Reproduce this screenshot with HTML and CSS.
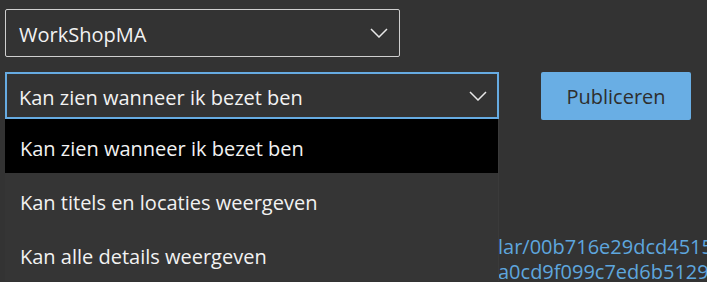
FILE: index.html
```html
<!DOCTYPE html>
<html>
<head>
  <title>Agenda publiceren</title>
  <link rel="stylesheet" href="styles.css">
</head>
<body>
  <div class="page">
    <div class="field field-calendar">
      <span class="field-text">WorkShopMA</span>
      <svg class="chevron" width="18" height="10" viewBox="0 0 18 10"><polyline points="1,1 9,9 17,1" fill="none" stroke="#e8e8e8" stroke-width="1.5"/></svg>
    </div>

    <div class="share-row">
      <div class="select-wrap">
        <div class="field field-open">
          <span class="field-text">Kan zien wanneer ik bezet ben</span>
          <svg class="chevron" width="18" height="10" viewBox="0 0 18 10"><polyline points="1,1 9,9 17,1" fill="none" stroke="#e8e8e8" stroke-width="1.5"/></svg>
        </div>
        <ul class="options">
          <li class="option selected">Kan zien wanneer ik bezet ben</li>
          <li class="option">Kan titels en locaties weergeven</li>
          <li class="option">Kan alle details weergeven</li>
        </ul>
      </div>
      <button class="publish">Publiceren</button>
    </div>

    <div class="links">
      <a class="link">lar/00b716e29dcd4515</a>
      <a class="link">a0cd9f099c7ed6b5129</a>
    </div>
  </div>
</body>
</html>
```

FILE: styles.css
```css
html, body{
  margin: 0;
  height: 100%;
  overflow: hidden;
}

body{
  background-color: #333333;
  font-family: "Open Sans", "Noto Sans", sans-serif;
  color: #f2f2f2;
}

.page{
  padding: 9px 0 0 5px;
}

.field{
  display: flex;
  align-items: center;
  justify-content: space-between;
  box-sizing: border-box;
  font-size: 20px;
}

.field-calendar{
  width: 395px;
  height: 48px;
  border: 1px solid #cfcfcf;
  border-radius: 2px;
  padding: 0 11px 0 13px;
}

.field-open{
  width: 494px;
  height: 47px;
  border: 2px solid #66abe2;
  padding: 0 10px 0 12px;
}

.field-text{
  padding-top: 3px;
}

.share-row{
  display: flex;
  align-items: flex-start;
  gap: 42px;
  margin-top: 15px;
}

.select-wrap{
  position: relative;
}

.options{
  position: absolute;
  top: 100%;
  left: 0;
  width: 494px;
  margin: 0;
  padding: 0;
  list-style: none;
  background-color: #353535;
  border-right: 1px solid #3a3a3a;
  box-sizing: border-box;
  z-index: 2;
}

.option{
  height: 54px;
  display: flex;
  align-items: center;
  padding: 4px 0 0 15px;
  font-size: 20px;
  box-sizing: border-box;
}

.selected{
  background-color: #000000;
}

.publish{
  width: 150px;
  height: 48px;
  background-color: #69aee4;
  color: #2e2e2e;
  border: none;
  border-radius: 2px;
  font-family: "Open Sans", "Noto Sans", sans-serif;
  font-size: 20px;
  padding-top: 2px;
}

.links{
  display: flex;
  flex-direction: column;
  margin: 114px 0 0 493px;
  white-space: nowrap;
}

.link{
  color: #5ea6de;
  font-size: 20px;
  line-height: 25px;
}
```
